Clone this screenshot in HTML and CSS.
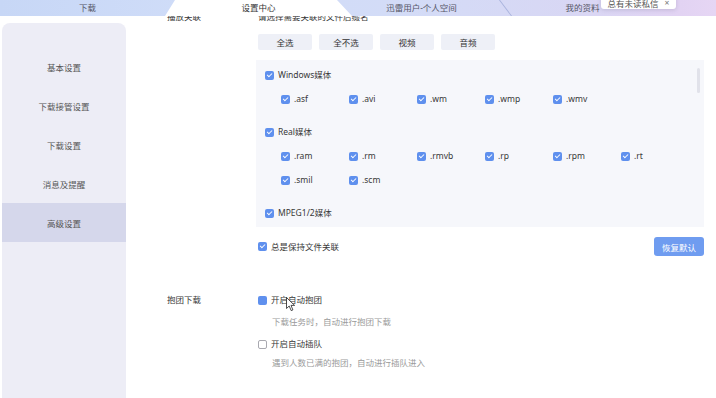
FILE: index.html
```html
<!DOCTYPE html>
<html lang="zh-CN">
<head>
<meta charset="utf-8">
<title>设置中心</title>
<link rel="stylesheet" href="styles.css">
</head>
<body>
<header class="tabbar">
  <div class="tab t1">下载</div>
  <div class="tab t2 active">设置中心</div>
  <div class="tab t3">迅雷用户-个人空间</div>
  <div class="tab t4">我的资料</div>
  <div class="tip">总有未读私信 <span class="x">×</span></div>
</header>
<div class="main">
  <nav class="side">
    <div class="side-item">基本设置</div>
    <div class="side-item">下载接管设置</div>
    <div class="side-item">下载设置</div>
    <div class="side-item">消息及提醒</div>
    <div class="side-item active">高级设置</div>
  </nav>
  <section class="content">
    <div class="scroll">
      <div class="row">
        <div class="label">播放关联</div>
        <div class="val">
          <div class="hint">请选择需要关联的文件后缀名</div>
          <div class="btns">
            <div class="btn">全选</div>
            <div class="btn">全不选</div>
            <div class="btn">视频</div>
            <div class="btn">音频</div>
          </div>
          <div class="box">
            <div class="grp">
              <div class="chk"><span class="cb"></span>Windows媒体</div>
              <div class="sub">
                <div class="chk"><span class="cb"></span>.asf</div>
                <div class="chk"><span class="cb"></span>.avi</div>
                <div class="chk"><span class="cb"></span>.wm</div>
                <div class="chk"><span class="cb"></span>.wmp</div>
                <div class="chk"><span class="cb"></span>.wmv</div>
              </div>
            </div>
            <div class="grp">
              <div class="chk"><span class="cb"></span>Real媒体</div>
              <div class="sub">
                <div class="chk"><span class="cb"></span>.ram</div>
                <div class="chk"><span class="cb"></span>.rm</div>
                <div class="chk"><span class="cb"></span>.rmvb</div>
                <div class="chk"><span class="cb"></span>.rp</div>
                <div class="chk"><span class="cb"></span>.rpm</div>
                <div class="chk"><span class="cb"></span>.rt</div>
                <div class="chk"><span class="cb"></span>.smil</div>
                <div class="chk"><span class="cb"></span>.scm</div>
              </div>
            </div>
            <div class="grp">
              <div class="chk"><span class="cb"></span>MPEG1/2媒体</div>
            </div>
            <div class="thumb"></div>
          </div>
          <div class="keep">
            <div class="chk"><span class="cb"></span>总是保持文件关联</div>
            <div class="reset">恢复默认</div>
          </div>
        </div>
      </div>
      <div class="row group-row">
        <div class="label">抱团下载</div>
        <div class="val">
          <div class="chk"><span class="cb plain"></span>开启自动抱团</div>
          <div class="desc">下载任务时，自动进行抱团下载</div>
          <div class="chk opt2"><span class="cb off"></span>开启自动插队</div>
          <div class="desc d2">遇到人数已满的抱团，自动进行插队进入</div>
        </div>
      </div>
    </div>
  </section>
</div>
<svg class="cursor" width="10" height="15" viewBox="0 0 10 15"><path d="M0.5 0.5 L0.5 11.5 L3.2 9 L5.2 13.6 L6.9 12.9 L5 8.4 L8.6 8.4 Z" fill="#fff" stroke="#222" stroke-width="0.8" stroke-linejoin="round"/></svg>
</body>
</html>
```
FILE: styles.css
```css
html, body {
  margin: 0;
  padding: 0;
}
body {
  width: 716px;
  height: 398px;
  overflow: hidden;
  background: #fff;
  font-family: "Noto Sans", "Noto Sans CJK SC", sans-serif;
  font-size: 8.5px;
  color: #383838;
  position: relative;
}

/* tab bar */
.tabbar {
  position: relative;
  height: 16px;
  display: flex;
  background: linear-gradient(90deg, #c7d7f6 0%, #cfdcf8 25%, #d3dcf7 55%, #d8d7f4 80%, #e2d3f3 95%, #e6d6f4 100%);
}
.tab {
  height: 16px;
  display: flex;
  align-items: center;
  justify-content: center;
  color: #556;
  box-sizing: border-box;
  padding-bottom: 2px;
  flex: none;
}
.t1 { width: 165px; padding-left: 10px; }
.t2 {
  width: 187px;
  background: #fff;
  color: #333;
  clip-path: polygon(10px 0, 172px 0, 187px 100%, 0 100%);
}
.t3 { width: 153px; padding-right: 14px; }
.t4 { width: 155px; position: relative; }
.t4::before {
  content: "";
  position: absolute;
  left: 0;
  top: 0;
  width: 1px;
  height: 16px;
  background: rgba(130, 145, 200, 0.55);
  transform: skewX(37deg);
}
.tip {
  position: absolute;
  left: 601px;
  top: -4px;
  width: 75px;
  height: 13px;
  background: #fff;
  border-radius: 3px;
  box-shadow: 0 1px 4px rgba(60, 60, 100, 0.18);
  display: flex;
  align-items: center;
  justify-content: center;
  gap: 6px;
  color: #555;
}
.tip .x { color: #777; }

/* layout */
.main {
  display: flex;
  height: 382px;
}
.side {
  width: 124px;
  margin: 7px 0 0 2px;
  background: #ededf6;
  border-radius: 8px 8px 0 0;
  padding-top: 24px;
  flex: none;
}
.side-item {
  height: 39px;
  display: flex;
  align-items: center;
  justify-content: center;
  color: #555;
}
.side-item.active {
  background: #d5d7eb;
}
.content {
  flex: 1;
  overflow: hidden;
  padding: 0 12px 0 41px;
}
.scroll {
  margin-top: -5px;
}
.row {
  display: flex;
}
.label {
  width: 91px;
  flex: none;
  line-height: 12px;
}
.val {
  flex: 1;
  min-width: 0;
}
.hint {
  line-height: 12px;
}
.btns {
  display: flex;
  gap: 7px;
  margin-top: 11px;
}
.btn {
  width: 54px;
  height: 16px;
  background: #eef0f7;
  border-radius: 2px;
  display: flex;
  align-items: center;
  justify-content: center;
  color: #333;
}

/* association box */
.box {
  position: relative;
  margin: 10px 0 0 -2px;
  height: 167px;
  box-sizing: border-box;
  background: #f6f7fb;
  overflow: hidden;
  padding: 9px 0 0 9px;
}
.grp + .grp {
  margin-top: 21px;
}
.sub {
  display: grid;
  grid-template-columns: repeat(6, 68px);
  row-gap: 12px;
  padding-left: 16px;
  margin-top: 12px;
}
.thumb {
  position: absolute;
  right: 4px;
  top: 8px;
  width: 3px;
  height: 25px;
  border-radius: 2px;
  background: #e1e2ea;
}

/* checkbox */
.chk {
  display: flex;
  align-items: center;
  gap: 4px;
  height: 12px;
  line-height: 12px;
  white-space: nowrap;
}
.cb {
  position: relative;
  width: 9px;
  height: 9px;
  border-radius: 2px;
  background: #5f90ee;
  flex: none;
  box-sizing: border-box;
}
.cb::after {
  content: "";
  position: absolute;
  left: 3.1px;
  top: 1.2px;
  width: 2px;
  height: 4.3px;
  border: solid #fff;
  border-width: 0 1px 1px 0;
  transform: rotate(45deg);
}
.cb.plain::after {
  display: none;
}
.cb.off {
  background: #fff;
  border: 1px solid #a9a9b0;
}
.cb.off::after {
  display: none;
}

.keep {
  display: flex;
  justify-content: space-between;
  align-items: center;
  margin-top: 10px;
}
.reset {
  width: 50px;
  height: 19px;
  border-radius: 3px;
  background: #6f9cf0;
  color: #fff;
  display: flex;
  align-items: center;
  justify-content: center;
}

.group-row {
  margin-top: 38px;
}
.desc {
  padding-left: 14px;
  margin-top: 10px;
  line-height: 12px;
  color: #9a9a9a;
}
.opt2 {
  margin-top: 10px;
}
.desc.d2 {
  margin-top: 7px;
}

.cursor {
  position: absolute;
  left: 286px;
  top: 297px;
}
```
